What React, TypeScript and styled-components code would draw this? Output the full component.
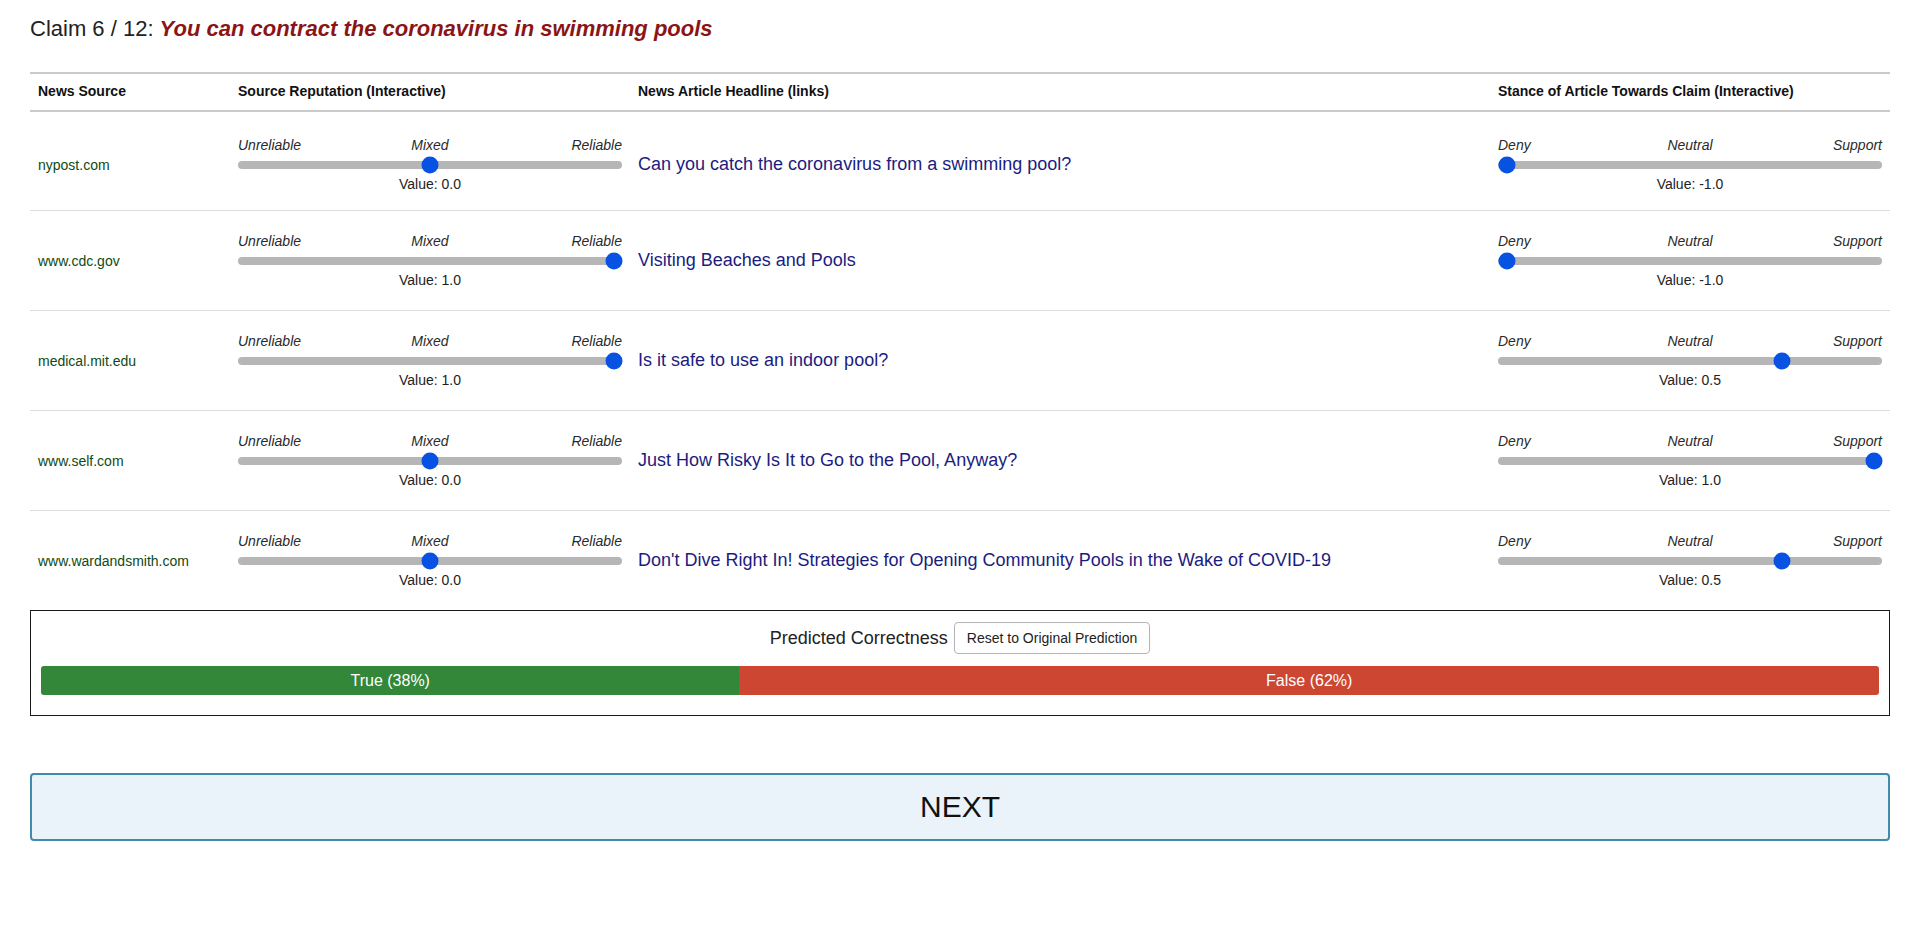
import React from "react";
import styled, { createGlobalStyle } from "styled-components";

const GlobalStyle = createGlobalStyle`
  html, body {
    margin: 0;
    padding: 0;
    background: #ffffff;
    font-family: "Liberation Sans", Arial, sans-serif;
    color: #222;
  }
`;

const Page = styled.div`
  padding: 16px 30px 0;
`;

const Title = styled.h1`
  margin: 0 0 30px;
  font-size: 22px;
  font-weight: normal;
  line-height: normal;
  color: #222;
`;

const ClaimText = styled.span`
  color: #8b1515;
  font-weight: bold;
  font-style: italic;
`;

const cols = "200px 400px 1fr 400px";

const HeaderRow = styled.div`
  display: grid;
  grid-template-columns: ${cols};
  border-top: 2px solid #cacaca;
  border-bottom: 2px solid #cacaca;
`;

const HeaderCell = styled.div`
  padding: 8px 8px 10px;
  font-size: 14px;
  line-height: 18px;
  font-weight: bold;
  color: #111;
`;

const Row = styled.div<{ $first?: boolean; $last?: boolean }>`
  display: grid;
  grid-template-columns: ${cols};
  align-items: center;
  padding: ${(p) => (p.$first ? "25px 0 18px" : "22px 0 22px")};
  border-bottom: ${(p) => (p.$last ? "none" : "1px solid #dcdcdc")};
`;

const Cell = styled.div`
  padding: 0 8px;
`;

const Source = styled.span`
  font-size: 14px;
  color: #0f4a12;
`;

const Headline = styled.a`
  font-size: 18px;
  color: #1c1c80;
  text-decoration: none;
`;

const SliderWrap = styled.div`
  display: flex;
  flex-direction: column;
`;

const Labels = styled.div`
  display: grid;
  grid-template-columns: 1fr auto 1fr;
  font-size: 14px;
  line-height: 16px;
  font-style: italic;
  color: #2a2a2a;
`;

const Label = styled.span<{ $align: "start" | "center" | "end" }>`
  justify-self: ${(p) => p.$align};
`;

const TrackArea = styled.div`
  height: 17px;
  margin: 3px 0;
  display: flex;
  align-items: center;
`;

const Track = styled.div`
  position: relative;
  width: 100%;
  height: 8px;
  border-radius: 4px;
  background: #b6b6b6;
`;

const Thumb = styled.div`
  position: absolute;
  top: 50%;
  width: 17px;
  height: 17px;
  border-radius: 50%;
  background: #0752e3;
  transform: translate(-50%, -50%);
`;

const ValueText = styled.div`
  text-align: center;
  font-size: 14px;
  line-height: 16px;
  color: #222;
`;

const PredictBox = styled.div`
  border: 1px solid #1a1a1a;
  padding: 11px 10px 20px;
  display: flex;
  flex-direction: column;
  gap: 12px;
`;

const PredictHead = styled.div`
  display: flex;
  justify-content: center;
  align-items: center;
  gap: 6px;
`;

const PredictLabel = styled.span`
  font-size: 18px;
  color: #222;
`;

const ResetButton = styled.button`
  height: 32px;
  padding: 0 12px;
  font-family: "Liberation Sans", Arial, sans-serif;
  font-size: 14px;
  color: #222;
  background: #fff;
  border: 1px solid #b4b4b4;
  border-radius: 4px;
`;

const Bar = styled.div`
  display: flex;
  height: 29px;
  border-radius: 3px;
  overflow: hidden;
`;

const BarPart = styled.div<{ $tone: "true" | "false" }>`
  display: flex;
  align-items: center;
  justify-content: center;
  font-size: 16px;
  color: #fff;
  background: ${(p) => (p.$tone === "true" ? "#338738" : "#cc4632")};
`;

const NextButton = styled.button`
  display: block;
  width: 100%;
  height: 68px;
  margin-top: 57px;
  border: 2px solid #3e8bac;
  border-radius: 4px;
  background: #ebf3fa;
  font-family: "Liberation Sans", Arial, sans-serif;
  font-size: 30px;
  color: #111;
`;

type SliderProps = {
  labels: [string, string, string];
  value: number;
};

const Slider: React.FC<SliderProps> = ({ labels, value }) => {
  const frac = (value + 1) / 2;
  return (
    <SliderWrap>
      <Labels>
        <Label $align="start">{labels[0]}</Label>
        <Label $align="center">{labels[1]}</Label>
        <Label $align="end">{labels[2]}</Label>
      </Labels>
      <TrackArea>
        <Track>
          <Thumb style={{ left: `calc(8.5px + (100% - 17px) * ${frac})` }} />
        </Track>
      </TrackArea>
      <ValueText>Value: {value.toFixed(1)}</ValueText>
    </SliderWrap>
  );
};

const rows = [
  { source: "nypost.com", rep: 0, headline: "Can you catch the coronavirus from a swimming pool?", stance: -1 },
  { source: "www.cdc.gov", rep: 1, headline: "Visiting Beaches and Pools", stance: -1 },
  { source: "medical.mit.edu", rep: 1, headline: "Is it safe to use an indoor pool?", stance: 0.5 },
  { source: "www.self.com", rep: 0, headline: "Just How Risky Is It to Go to the Pool, Anyway?", stance: 1 },
  {
    source: "www.wardandsmith.com",
    rep: 0,
    headline: "Don't Dive Right In! Strategies for Opening Community Pools in the Wake of COVID-19",
    stance: 0.5,
  },
];

export default function App() {
  const truePct = 38;
  return (
    <>
      <GlobalStyle />
      <Page>
        <Title>
          Claim 6 / 12: <ClaimText>You can contract the coronavirus in swimming pools</ClaimText>
        </Title>
        <HeaderRow>
          <HeaderCell>News Source</HeaderCell>
          <HeaderCell>Source Reputation (Interactive)</HeaderCell>
          <HeaderCell>News Article Headline (links)</HeaderCell>
          <HeaderCell>Stance of Article Towards Claim (Interactive)</HeaderCell>
        </HeaderRow>
        {rows.map((r, i) => (
          <Row key={r.source} $first={i === 0} $last={i === rows.length - 1}>
            <Cell>
              <Source>{r.source}</Source>
            </Cell>
            <Cell>
              <Slider labels={["Unreliable", "Mixed", "Reliable"]} value={r.rep} />
            </Cell>
            <Cell>
              <Headline href="#">{r.headline}</Headline>
            </Cell>
            <Cell>
              <Slider labels={["Deny", "Neutral", "Support"]} value={r.stance} />
            </Cell>
          </Row>
        ))}
        <PredictBox>
          <PredictHead>
            <PredictLabel>Predicted Correctness</PredictLabel>
            <ResetButton>Reset to Original Prediction</ResetButton>
          </PredictHead>
          <Bar>
            <BarPart $tone="true" style={{ width: `${truePct}%` }}>
              True ({truePct}%)
            </BarPart>
            <BarPart $tone="false" style={{ width: `${100 - truePct}%` }}>
              False ({100 - truePct}%)
            </BarPart>
          </Bar>
        </PredictBox>
        <NextButton>NEXT</NextButton>
      </Page>
    </>
  );
}
